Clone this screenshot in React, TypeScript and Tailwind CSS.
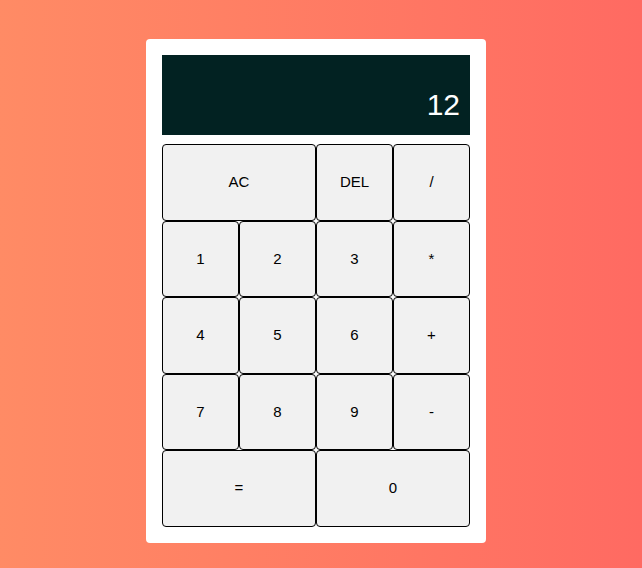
const keys: { label: string; wide?: boolean }[] = [
  { label: "AC", wide: true },
  { label: "DEL" },
  { label: "/" },
  { label: "1" },
  { label: "2" },
  { label: "3" },
  { label: "*" },
  { label: "4" },
  { label: "5" },
  { label: "6" },
  { label: "+" },
  { label: "7" },
  { label: "8" },
  { label: "9" },
  { label: "-" },
  { label: "=", wide: true },
  { label: "0", wide: true },
];

export default function App() {
  return (
    <div className="min-h-[568px] w-full bg-gradient-to-r from-[#ff8b65] to-[#ff6a62] flex justify-center pr-[10px] pt-[39px] font-['Liberation_Sans',Arial,sans-serif]">
      <div className="bg-white rounded-[4px] p-4 h-fit">
        {/* display */}
        <div className="w-[308px] h-[80px] bg-[#022222] text-white text-[30px] flex items-end justify-end px-[10px] pb-[8px] mb-[9px]">
          12
        </div>
        {/* keypad */}
        <div className="grid grid-cols-[repeat(4,77px)] auto-rows-[76.6px]">
          {keys.map((k) => (
            <button
              key={k.label}
              className={`${k.wide ? "col-span-2" : ""} bg-[#f1f1f1] border border-black rounded-[4px] text-[15px] text-black`}
            >
              {k.label}
            </button>
          ))}
        </div>
      </div>
    </div>
  );
}
